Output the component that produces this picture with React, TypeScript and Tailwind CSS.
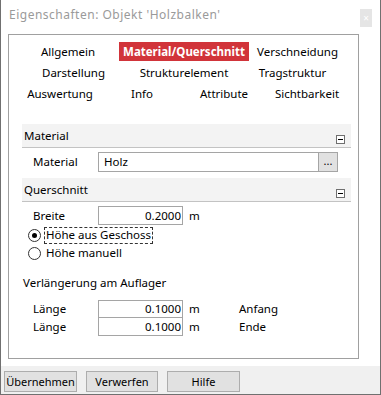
import React from "react";

function Minus() {
  return (
    <div className="w-[9px] h-[9px] border border-[#6f6f6f] bg-white flex items-center justify-center">
      <div className="w-[5px] h-[1px] bg-black" />
    </div>
  );
}

function GroupHeader({ title }: { title: string }) {
  return (
    <div className="h-[24px] bg-[#f3f3f3] border-b border-[#c3c3c3] flex justify-between">
      <span className="self-center pl-[2px]">{title}</span>
      <div className="self-end mb-[3px] mr-[6px]">
        <Minus />
      </div>
    </div>
  );
}

function Radio({ checked }: { checked?: boolean }) {
  return (
    <div className="w-[13px] h-[13px] rounded-full border border-[#333333] bg-white flex items-center justify-center">
      {checked && <div className="w-[5px] h-[5px] rounded-full bg-black" />}
    </div>
  );
}

export default function App() {
  return (
    <div className="w-[381px] h-[395px] flex flex-col bg-white border-x border-b border-[#707070] text-[11.5px] leading-none text-black font-['Noto_Sans',sans-serif]">
      <div className="h-[34px] relative flex items-start shrink-0">
        <span className="mt-[9px] ml-[8px] text-[12px] tracking-[0.5px] text-[#9a9a9a]">Eigenschaften: Objekt 'Holzbalken'</span>
        <div className="absolute left-[359px] top-[9px] w-[12px] h-[18px] bg-[#e5e5e5] flex items-center justify-center text-white text-[10px]">
          ×
        </div>
      </div>

      <div className="ml-[7px] w-[351px] h-[325px] border border-[#a0a0a0] shrink-0 flex flex-col">
        <div className="pt-[6px]">
          <div className="h-[21px] flex items-center">
            <div className="ml-[19px] w-[80px] text-center">Allgemein</div>
            <div className="ml-[11px] w-[130px] h-[19px] bg-[#d1343a] text-white font-bold flex items-center justify-center">
              Material/Querschnitt
            </div>
            <div className="ml-[3px] w-[91px] text-center">Verschneidung</div>
          </div>
          <div className="h-[21px] flex items-center">
            <div className="ml-[24px] w-[81px] text-center">Darstellung</div>
            <div className="ml-[20px] w-[100px] text-center">Strukturelement</div>
            <div className="ml-[18px] w-[81px] text-center">Tragstruktur</div>
          </div>
          <div className="h-[21px] flex items-center">
            <div className="ml-[16px] w-[70px] text-center">Auswertung</div>
            <div className="ml-[12px] w-[70px] text-center">Info</div>
            <div className="ml-[12px] w-[70px] text-center">Attribute</div>
            <div className="ml-[13px] w-[70px] text-center">Sichtbarkeit</div>
          </div>
        </div>

        <div className="ml-[13px] w-[329px] mt-[20px] flex flex-col">
          <GroupHeader title="Material" />
          <div className="mt-[4px] h-[20px] flex items-center">
            <span className="pl-[11px] w-[76px]">Material</span>
            <div className="w-[221px] h-[20px] border border-[#a5a5a5] flex items-center pl-[5px]">Holz</div>
            <div className="-ml-[1px] w-[20px] h-[20px] border border-[#a5a5a5] bg-[#e1e1e1] flex items-center justify-center text-[11px] pb-[3px]">
              ...
            </div>
          </div>

          <div className="mt-[6px]">
            <GroupHeader title="Querschnitt" />
          </div>
          <div className="mt-[4px] h-[19px] flex items-center">
            <span className="pl-[11px] w-[76px]">Breite</span>
            <div className="w-[85px] h-[19px] border border-[#a5a5a5] flex items-center justify-end pr-[1px]">0.2000</div>
            <span className="ml-[6px]">m</span>
          </div>
          <div className="mt-[1px] h-[18px] flex items-center pl-[6px]">
            <Radio checked />
            <span className="ml-[3px] h-[17px] px-[1px] border border-dashed border-[#333333] flex items-center">
              Höhe aus Geschoss
            </span>
          </div>
          <div className="h-[18px] flex items-center pl-[6px]">
            <Radio />
            <span className="ml-[3px] px-[1px] border border-transparent">Höhe manuell</span>
          </div>

          <div className="mt-[12px] h-[18px] flex items-center pl-[1px]">Verlängerung am Auflager</div>

          <div className="mt-[8px] h-[18px] flex items-center">
            <span className="pl-[11px] w-[76px]">Länge</span>
            <div className="w-[85px] h-[18px] border border-[#a5a5a5] flex items-center justify-end pr-[1px]">0.1000</div>
            <span className="ml-[6px] w-[50px]">m</span>
            <span>Anfang</span>
          </div>
          <div className="h-[18px] flex items-center">
            <span className="pl-[11px] w-[76px]">Länge</span>
            <div className="w-[85px] h-[18px] border border-t-0 border-[#a5a5a5] flex items-center justify-end pr-[1px]">0.1000</div>
            <span className="ml-[6px] w-[50px]">m</span>
            <span>Ende</span>
          </div>
        </div>
      </div>

      <div className="mt-[7px] flex-1 bg-[#f0f0f0] flex items-start pt-[5px] pl-[3px] text-[11px]">
        <div className="w-[73px] h-[21px] border border-[#adadad] bg-[#e1e1e1] flex items-center justify-center">Übernehmen</div>
        <div className="ml-[9px] w-[72px] h-[21px] border border-[#adadad] bg-[#e1e1e1] flex items-center justify-center">Verwerfen</div>
        <div className="ml-[9px] w-[73px] h-[21px] border border-[#adadad] bg-[#e1e1e1] flex items-center justify-center">Hilfe</div>
      </div>
    </div>
  );
}
